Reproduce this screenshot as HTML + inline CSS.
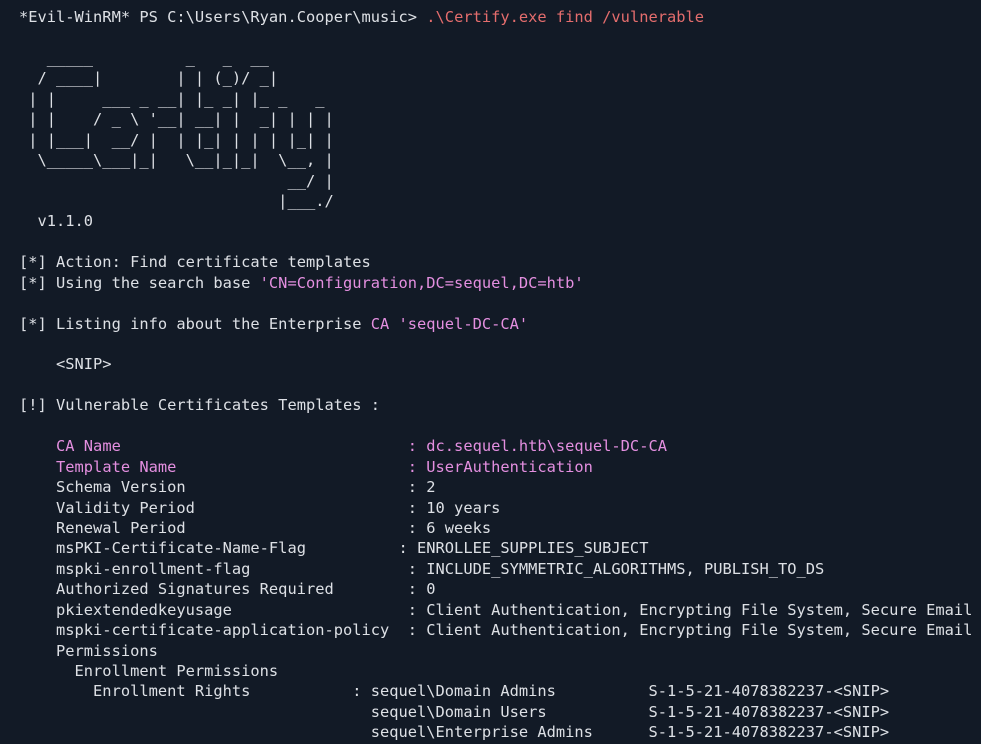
<!DOCTYPE html>
<html><head><meta charset="utf-8"><style>
html,body{margin:0;padding:0;background:#121a26;width:981px;height:744px;overflow:hidden}
pre{margin:0;padding:7px 0 0 19px;font-family:"DejaVu Sans Mono","Liberation Mono",monospace;font-size:15.38px;line-height:20.43px;color:#dde0e5;white-space:pre}
.r{color:#e46d6d}.p{color:#e48fe0}
</style></head><body><pre>*Evil-WinRM* PS C:\Users\Ryan.Cooper\music&gt; <span class="r">.\Certify.exe find /vulnerable</span>

   _____          _   _  __
  / ____|        | | (_)/ _|
 | |     ___ _ __| |_ _| |_ _   _
 | |    / _ \ '__| __| |  _| | | |
 | |___|  __/ |  | |_| | | | |_| |
  \_____\___|_|   \__|_|_|  \__, |
                             __/ |
                            |___./
  v1.1.0

[*] Action: Find certificate templates
[*] Using the search base <span class="p">'CN=Configuration,DC=sequel,DC=htb'</span>

[*] Listing info about the Enterprise <span class="p">CA 'sequel-DC-CA'</span>

    &lt;SNIP&gt;

[!] Vulnerable Certificates Templates :

    <span class="p">CA Name                               : dc.sequel.htb\sequel-DC-CA</span>
    <span class="p">Template Name                         : UserAuthentication</span>
    Schema Version                        : 2
    Validity Period                       : 10 years
    Renewal Period                        : 6 weeks
    msPKI-Certificate-Name-Flag          : ENROLLEE_SUPPLIES_SUBJECT
    mspki-enrollment-flag                 : INCLUDE_SYMMETRIC_ALGORITHMS, PUBLISH_TO_DS
    Authorized Signatures Required        : 0
    pkiextendedkeyusage                   : Client Authentication, Encrypting File System, Secure Email
    mspki-certificate-application-policy  : Client Authentication, Encrypting File System, Secure Email
    Permissions
      Enrollment Permissions
        Enrollment Rights           : sequel\Domain Admins          S-1-5-21-4078382237-&lt;SNIP&gt;
                                      sequel\Domain Users           S-1-5-21-4078382237-&lt;SNIP&gt;
                                      sequel\Enterprise Admins      S-1-5-21-4078382237-&lt;SNIP&gt;
</pre></body></html>
